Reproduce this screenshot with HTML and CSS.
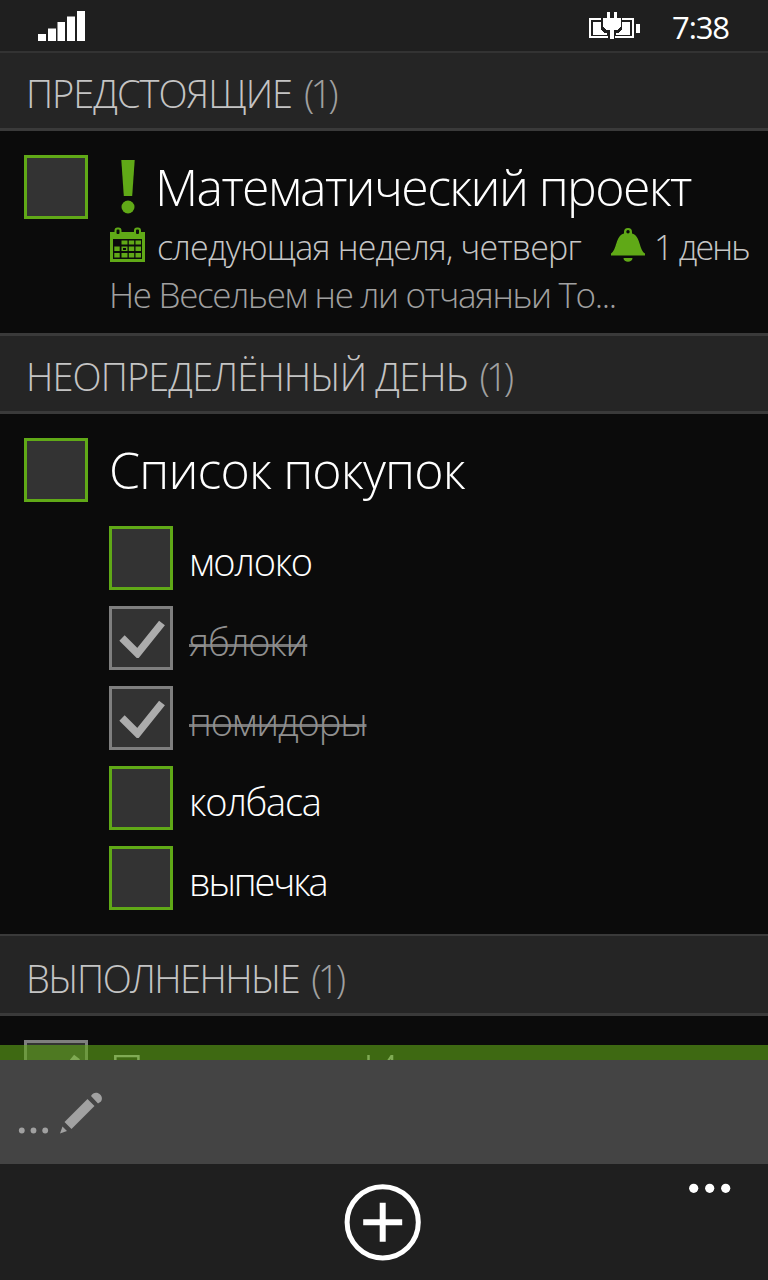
FILE: index.html
```
<!DOCTYPE html>
<html lang="ru">
<head>
<meta charset="utf-8">
<title>Задачи</title>
<link rel="stylesheet" href="styles.css">
</head>
<body>
<div class="phone">
  <header class="status">
    <svg class="signal" width="48" height="32" viewBox="0 0 48 32" fill="#fff"><path d="M0 24h8v7H0zM10 18.500h8V31h-8zM19.500 12H27v19h-7.500zM29 6.500h8V31h-8zM39 1h8v30h-8z"/></svg>
    <div class="status-right">
      <svg class="battery" width="52" height="28" viewBox="0 0 52 28" shape-rendering="crispEdges"><path d="M13 7H2v18h18M34 7h11v18H27" fill="none" stroke="#fff" stroke-width="2"/><path d="M5 10h8v7l3 4h3v2H5zM42 10h-8v7l-3 4h-3v2h14z" fill="#fff"/><path d="M15 6h4V0h3v6h4V0h3v6h4v8l-3 4h-4v9h-4v-9h-4l-3-4zM48 12h4v9h-4z" fill="#fff"/></svg>
      <span class="clock">7:38</span>
    </div>
  </header>
  <section>
    <h2 class="group group-first"><span>ПРЕДСТОЯЩИЕ</span><span class="count">(1)</span></h2>
    <article class="task task-upcoming">
      <span class="box"></span>
      <div class="body">
        <div class="title-row">
          <svg class="bang" width="36" height="56" viewBox="0 0 36 56" fill="#60a917"><path d="M12.300 1h13.400l-2.500 36h-8.400z"/><circle cx="19" cy="48" r="6.500"/></svg>
          <span class="title">Математический проект</span>
        </div>
        <div class="meta">
          <svg class="calendar" width="36" height="36" viewBox="0 0 36 36"><path d="M0 5h35v30H0z" fill="#60a917"/><path d="M3 12h29v20H3z" fill="#0b0b0b"/><rect x="5.500" y="1.500" width="5" height="6.500" rx="2" fill="#0b0b0b" stroke="#60a917" stroke-width="2"/><rect x="25" y="1.500" width="5" height="6.500" rx="2" fill="#0b0b0b" stroke="#60a917" stroke-width="2"/><path d="M11.500 13.500h6v4h-6zM18.800 13.500h5.400v4h-5.400zM25.500 13.500H31v4h-5.500zM4.300 19.500h5.400v4.500H4.300zM11.500 19.500h6v4.500h-6zM18.800 19.500h5.400v4.500h-5.400zM25.500 19.500H31v4.500h-5.500zM4.300 26h5.400v4.500H4.300zM11.500 26h6v4.500h-6zM18.800 26h5.400v4.500h-5.400zM25.500 26H31v4.500h-5.500z" fill="#60a917"/><path d="M13 21h3v2h-3z" fill="#0b0b0b"/></svg>
          <span class="when">следующая неделя, четверг</span>
          <svg class="bell" width="34" height="36" viewBox="0 0 34 36"><path d="M0 27.500v-2C6 22 4.500 7.500 13 5.500V4a4 4 0 0 1 8 0v1.500C29.500 7.500 28 22 34 25.500v2zM12.500 30h9c0 5-9 5-9 0z" fill="#60a917"/><circle cx="17" cy="3.800" r="1.700" fill="#0b0b0b"/></svg>
          <span class="remind">1 день</span>
        </div>
        <p class="note">Не Весельем не ли отчаяньи То...</p>
      </div>
    </article>
  </section>
  <section>
    <h2 class="group group-second"><span>НЕОПРЕДЕЛЁННЫЙ ДЕНЬ</span><span class="count">(1)</span></h2>
    <article class="task task-list">
      <span class="box"></span>
      <div class="body">
        <div class="title-row"><span class="title list-title">Список покупок</span></div>
        <ul class="items">
          <li><span class="box"></span><span class="label">молоко</span></li>
          <li class="done"><span class="box"><svg class="check" width="46" height="38" viewBox="0 0 46 38"><path d="M3 18l15.500 15.500L43 3" fill="none" stroke="#acacac" stroke-width="7.500"/></svg></span><span class="label">яблоки</span></li>
          <li class="done"><span class="box"><svg class="check" width="46" height="38" viewBox="0 0 46 38"><path d="M3 18l15.500 15.500L43 3" fill="none" stroke="#acacac" stroke-width="7.500"/></svg></span><span class="label">помидоры</span></li>
          <li><span class="box"></span><span class="label">колбаса</span></li>
          <li><span class="box"></span><span class="label label-tight">выпечка</span></li>
        </ul>
      </div>
    </article>
  </section>
  <section class="completed">
    <h2 class="group group-third"><span>ВЫПОЛНЕННЫЕ</span><span class="count">(1)</span></h2>
    <article class="task done">
      <span class="box"><svg class="check" width="46" height="38" viewBox="0 0 46 38"><path d="M3 18l15.500 15.500L43 3" fill="none" stroke="#acacac" stroke-width="7.500"/></svg></span>
      <div class="body"><div class="title-row"><span class="title">Позвонить Ивану</span></div></div>
    </article>
  </section>
  <div class="quick">
    <span class="ribbon"></span>
    <svg width="86" height="44" viewBox="0 0 86 44" fill="#a1a1a1"><circle cx="3.800" cy="39.500" r="2.900"/><circle cx="15.500" cy="39.500" r="2.900"/><circle cx="27.200" cy="39.500" r="2.900"/><path d="M42 42.500l2.500-7 4.500 4.500zM46.500 31l23-23 7 7-23 23zM73 5c4-7.500 14-1 10 5.500l-3 2z"/></svg>
  </div>
  <footer class="appbar">
    <svg class="add" width="78" height="78" viewBox="0 0 78 78" fill="none" stroke="#fff"><circle cx="38.700" cy="39.300" r="35.600" stroke-width="5"/><path d="M19.200 39.300h39M38.700 19.800v39" stroke-width="6"/></svg>
    <svg class="more" width="42" height="10" viewBox="0 0 42 10" fill="#fff"><circle cx="4.700" cy="5.300" r="4.600"/><circle cx="20.700" cy="5.300" r="4.600"/><circle cx="36.700" cy="5.300" r="4.600"/></svg>
  </footer>
</div>
</body>
</html>
```
FILE: styles.css
```
* { box-sizing: border-box; }
body { margin: 0; background: #0b0b0b; }
.phone {
  width: 768px; height: 1280px; overflow: hidden;
  display: flex; flex-direction: column;
  background: #0b0b0b; color: #fff;
  font-family: "Open Sans", "Noto Sans", sans-serif; font-weight: 300;
  white-space: nowrap;
}
svg { display: block; flex: none; }
.status {
  height: 51px; flex: none; padding: 10px 38px 0;
  display: flex; justify-content: space-between; background: #1f1f1f;
}
.status-right { display: flex; gap: 32px; }
.battery { margin-top: 2px; }
.clock { font-size: 31px; line-height: 35px; font-weight: 400; letter-spacing: -1.1px; margin-right: 1px; }
.group {
  margin: 0; padding: 4px 26px 0; flex: none;
  display: flex; align-items: center; gap: 12px;
  background: #252525; color: #c4c4c4;
  border: solid #3a3a3a; border-width: 3px 0;
  font-size: 38px; font-weight: 300; line-height: 48px;
}
.group-first { height: 80px; border-top: 2px solid #333; letter-spacing: -1.05px; }
.group-second { height: 81px; letter-spacing: -.9px; }
.group-third { height: 82px; padding-top: 6px; border-top: 2px solid #3a3a3a; letter-spacing: -1.6px; }
.count { color: #a0a0a0; letter-spacing: -3.8px; }
.task { display: flex; gap: 21px; padding: 24px 0 0 24px; }
.task-upcoming { height: 202px; }
.task-list { height: 520px; }
.box {
  width: 64px; height: 64px; flex: none;
  display: flex; align-items: center; justify-content: center;
  background: #333; border: 3px solid #60a917;
}
.done .box { border-color: #7f7f7f; padding: 2px 0 0 1px; }
.body { flex: 1; min-width: 0; }
.title-row { display: flex; align-items: center; gap: 10px; height: 64px; }
.title { font-size: 50px; line-height: 64px; letter-spacing: -1.63px; }
.list-title { letter-spacing: -.85px; }
.meta {
  display: flex; align-items: center; height: 50px; padding-left: 1px;
  color: #c6c6c6; font-size: 34px; line-height: 48px;
}
.calendar { margin-top: 2px; }
.when { margin-left: 11px; width: 424px; padding-top: 5px; letter-spacing: -.8px; }
.bell { margin: 4px 1px 0 30px; }
.remind { margin-left: 8px; padding-top: 5px; letter-spacing: -1.8px; }
.note { margin: 2px 0 0; color: #a0a0a0; font-size: 35px; line-height: 47px; letter-spacing: -1.32px; }
.items { list-style: none; margin: 24px 0 0; padding: 0; display: grid; gap: 16px; }
.items li { display: flex; align-items: center; gap: 16px; height: 64px; }
.label { padding-top: 5px; font-size: 38px; line-height: 64px; letter-spacing: -1.3px; }
.label-tight { letter-spacing: -2.1px; }
.done .label {
  color: #909090; letter-spacing: -1.15px;
  text-decoration: underline #777 3px; text-underline-offset: -12px; text-decoration-skip-ink: none;
}
.done .title { color: #b0b0b0; }
.completed { height: 126px; overflow: hidden; flex: none; }
.quick { position: relative; flex: none; height: 104px; padding: 31px 18px; background: #444; }
.ribbon { position: absolute; left: 0; right: 0; bottom: 100%; height: 15px; background: rgba(96, 169, 23, .6); }
.appbar {
  height: 116px; flex: none; background: #1f1f1f;
  display: grid; grid-template-columns: 1fr 78px 1fr; padding: 19px 37px 0 34px;
}
.add { grid-column: 2; }
.more { grid-column: 3; justify-self: end; }
```
